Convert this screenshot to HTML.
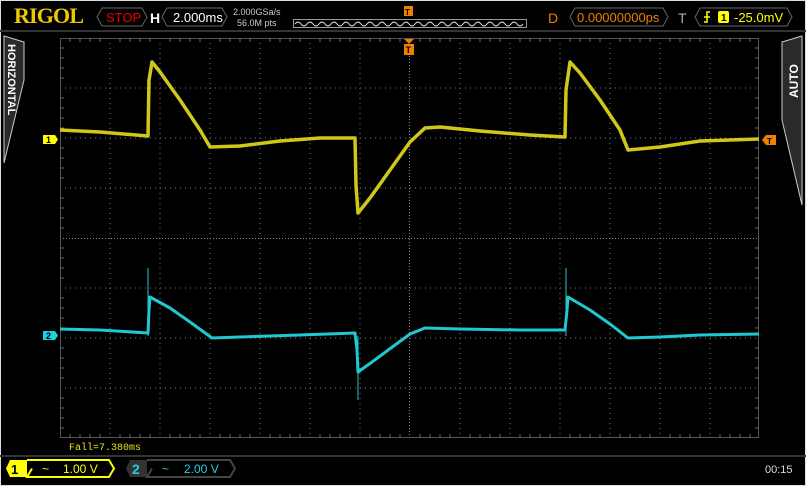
<!DOCTYPE html>
<html><head><meta charset="utf-8"><style>
body{margin:0;background:#000;width:806px;height:486px;overflow:hidden}
svg{display:block}
text{font-family:"Liberation Sans",sans-serif}
</style></head><body>
<svg width="806" height="486" viewBox="0 0 806 486">
<rect x="0.5" y="0.5" width="805" height="485" fill="#000" stroke="#ddd"/>
<text x="14" y="23" style="font-family:'Liberation Serif',serif" font-weight="bold" font-size="22" fill="#f0c800" textLength="70">RIGOL</text>
<path d="M102,8 L142,8 L147,17 L142,26 L102,26 L97,17 Z" fill="none" stroke="#666"/>
<text x="106" y="22" font-size="13" fill="#e00">STOP</text>
<text x="150" y="23" font-size="14" font-weight="bold" fill="#fff">H</text>
<path d="M167,8 L222,8 L227,17 L222,26 L167,26 L162,17 Z" fill="none" stroke="#666"/>
<text x="173" y="22" font-size="13" fill="#fff">2.000ms</text>
<text x="233" y="15" font-size="9" fill="#ccc">2.000GSa/s</text>
<text x="237" y="26" font-size="9" fill="#ccc">56.0M pts</text>
<rect x="293.5" y="19.5" width="233" height="8" fill="none" stroke="#999"/>
<path d="M295,24 q3,-4 6,0 t6,0 t6,0 t6,0 t6,0 t6,0 t6,0 t6,0 t6,0 t6,0 t6,0 t6,0 t6,0 t6,0 t6,0 t6,0 t6,0 t6,0 t6,0 t6,0 t6,0 t6,0 t6,0 t6,0 t6,0 t6,0 t6,0 t6,0 t6,0 t6,0 t6,0 t6,0 t6,0 t6,0 t6,0 t6,0 t6,0 t6,0" fill="none" stroke="#ddd"/>
<rect x="404" y="6" width="9" height="10" fill="#f08000"/><text x="405" y="15" font-size="8" font-weight="bold" fill="#000">T</text>
<text x="548" y="23" font-size="14" fill="#f08000">D</text>
<path d="M575,8 L663,8 L668,17 L663,26 L575,26 L570,17 Z" fill="none" stroke="#666"/>
<text x="577" y="22" font-size="13" fill="#f08000">0.00000000ps</text>
<text x="678" y="23" font-size="14" fill="#aaa">T</text>
<path d="M700,8 L787,8 L792,17 L787,26 L700,26 L695,17 Z" fill="none" stroke="#666"/>
<path d="M704,22 L707,22 L707,12 L710,12 M704,17 L710,17" stroke="#ff0" fill="none" stroke-width="1.5"/>
<rect x="718" y="11" width="11" height="12" rx="2" fill="#ff0"/><text x="721" y="21" font-size="10" font-weight="bold" fill="#000">1</text>
<text x="734" y="22" font-size="13" fill="#ff0">-25.0mV</text>
<line x1="0" y1="31" x2="806" y2="31" stroke="#333" stroke-width="2"/>
<path d="M4,36 L24,42 L24,80 L4,163 Z" fill="#2a2a2a" stroke="#ccc"/>
<text transform="translate(8,44) rotate(90)" font-size="11" font-weight="bold" fill="#fff">HORIZONTAL</text>
<path d="M802,36 L782,42 L782,120 L802,205 Z" fill="#2a2a2a" stroke="#ccc"/>
<text transform="translate(798,98) rotate(-90)" font-size="12" font-weight="bold" fill="#fff">AUTO</text>
<g stroke="#777" stroke-dasharray="1,4" stroke-width="1">
<path d="M110,38V438M160,38V438M210,38V438M260,38V438M310,38V438M360,38V438M460,38V438M510,38V438M560,38V438M610,38V438M660,38V438M710,38V438"/>
<path d="M60,88H759M60,138H759M60,188H759M60,288H759M60,338H759M60,388H759"/>
</g>
<line x1="409.5" y1="38" x2="409.5" y2="438" stroke="#888" stroke-dasharray="1,2"/>
<line x1="60" y1="238.5" x2="759" y2="238.5" stroke="#888" stroke-dasharray="1,2"/>
<rect x="60.5" y="38.5" width="698" height="399" fill="none" stroke="#555"/>
<g stroke="#666">
<path d="M70,38v4M80,38v4M90,38v4M100,38v4M120,38v4M130,38v4M140,38v4M150,38v4M170,38v4M180,38v4M190,38v4M200,38v4M220,38v4M230,38v4M240,38v4M250,38v4M270,38v4M280,38v4M290,38v4M300,38v4M320,38v4M330,38v4M340,38v4M350,38v4M370,38v4M380,38v4M390,38v4M400,38v4M420,38v4M430,38v4M440,38v4M450,38v4M470,38v4M480,38v4M490,38v4M500,38v4M520,38v4M530,38v4M540,38v4M550,38v4M570,38v4M580,38v4M590,38v4M600,38v4M620,38v4M630,38v4M640,38v4M650,38v4M670,38v4M680,38v4M690,38v4M700,38v4M720,38v4M730,38v4M740,38v4M750,38v4"/>
<path d="M70,438v-4M80,438v-4M90,438v-4M100,438v-4M120,438v-4M130,438v-4M140,438v-4M150,438v-4M170,438v-4M180,438v-4M190,438v-4M200,438v-4M220,438v-4M230,438v-4M240,438v-4M250,438v-4M270,438v-4M280,438v-4M290,438v-4M300,438v-4M320,438v-4M330,438v-4M340,438v-4M350,438v-4M370,438v-4M380,438v-4M390,438v-4M400,438v-4M420,438v-4M430,438v-4M440,438v-4M450,438v-4M470,438v-4M480,438v-4M490,438v-4M500,438v-4M520,438v-4M530,438v-4M540,438v-4M550,438v-4M570,438v-4M580,438v-4M590,438v-4M600,438v-4M620,438v-4M630,438v-4M640,438v-4M650,438v-4M670,438v-4M680,438v-4M690,438v-4M700,438v-4M720,438v-4M730,438v-4M740,438v-4M750,438v-4"/>
<path d="M60,48h4M60,58h4M60,68h4M60,78h4M60,98h4M60,108h4M60,118h4M60,128h4M60,148h4M60,158h4M60,168h4M60,178h4M60,198h4M60,208h4M60,218h4M60,228h4M60,248h4M60,258h4M60,268h4M60,278h4M60,298h4M60,308h4M60,318h4M60,328h4M60,348h4M60,358h4M60,368h4M60,378h4M60,398h4M60,408h4M60,418h4M60,428h4"/>
<path d="M759,48h-4M759,58h-4M759,68h-4M759,78h-4M759,98h-4M759,108h-4M759,118h-4M759,128h-4M759,148h-4M759,158h-4M759,168h-4M759,178h-4M759,198h-4M759,208h-4M759,218h-4M759,228h-4M759,248h-4M759,258h-4M759,268h-4M759,278h-4M759,298h-4M759,308h-4M759,318h-4M759,328h-4M759,348h-4M759,358h-4M759,368h-4M759,378h-4M759,398h-4M759,408h-4M759,418h-4M759,428h-4"/>
</g>
<path d="M404,39 L414,39 L409,44 Z" fill="#f08000"/>
<rect x="404" y="44" width="10" height="11" fill="#f08000"/><text x="405.5" y="53" font-size="9" font-weight="bold" fill="#000">T</text>
<polyline fill="none" stroke="#d0c818" stroke-width="3.5" stroke-linejoin="round" points="60,130 100,132 148,136 149,80 152,62 160,72 180,100 200,130 210,147 240,146 280,141 320,138 355,138 356,185 358,213 370,198 390,170 410,142 425,128 440,127 480,131 530,135 565,137 566,90 570,62 580,73 600,100 620,130 628,150 660,147 700,141 759,139"/>
<polyline fill="none" stroke="#20c8d0" stroke-width="3" stroke-linejoin="round" points="60,329 100,330 148,333 149,310 150,297 170,308 190,322 212,338 240,337 300,335 355,333 357,350 358,372 372,362 395,345 410,334 425,328 460,329 520,330 565,330 567,310 568,297 590,310 610,324 628,338 660,337 700,335 759,334"/>
<line x1="148" y1="268" x2="148" y2="336" stroke="#20c8d0"/>
<line x1="358" y1="336" x2="358" y2="400" stroke="#20c8d0"/>
<line x1="566" y1="268" x2="566" y2="336" stroke="#20c8d0"/>
<path d="M43,135 L55,135 L58,139.5 L55,144 L43,144 Z" fill="#ff0"/><text x="46" y="143" font-size="9" font-weight="bold" fill="#000">1</text>
<path d="M43,331 L55,331 L58,335.5 L55,340 L43,340 Z" fill="#20d0e0"/><text x="46" y="339" font-size="9" font-weight="bold" fill="#000">2</text>
<path d="M776,135 L766,135 L762,140 L766,145 L776,145 Z" fill="#f08000"/><text x="767" y="144" font-size="8" font-weight="bold" fill="#000">T</text>
<text x="69" y="450" style="font-family:'Liberation Mono',monospace" font-size="10" fill="#e8e020">Fall=7.380ms</text>
<line x1="0" y1="456" x2="806" y2="456" stroke="#333" stroke-width="2"/>
<path d="M10,460 L27,460 L27,477 L10,477 L6,468.5 Z" fill="#ff0"/>
<text x="11" y="474" font-size="13" font-weight="bold" fill="#000">1</text>
<path d="M27,460 L109,460 L114,468.5 L109,477 L27,477 L32,468.5" fill="none" stroke="#ff0" stroke-width="2"/>
<text x="42" y="473" font-size="12" fill="#ff0">~</text>
<text x="63" y="473" font-size="12" fill="#ff0">1.00 V</text>
<path d="M130,460 L147,460 L147,477 L130,477 L126,468.5 Z" fill="#333"/>
<text x="132" y="474" font-size="14" font-weight="bold" fill="#20d0e0">2</text>
<path d="M147,460 L230,460 L235,468.5 L230,477 L147,477 L152,468.5" fill="none" stroke="#444" stroke-width="2"/>
<text x="162" y="473" font-size="12" fill="#20d0e0">~</text>
<text x="184" y="473" font-size="12" fill="#20d0e0">2.00 V</text>
<text x="765" y="473" font-size="11" fill="#ddd">00:15</text>
</svg>
</body></html>
